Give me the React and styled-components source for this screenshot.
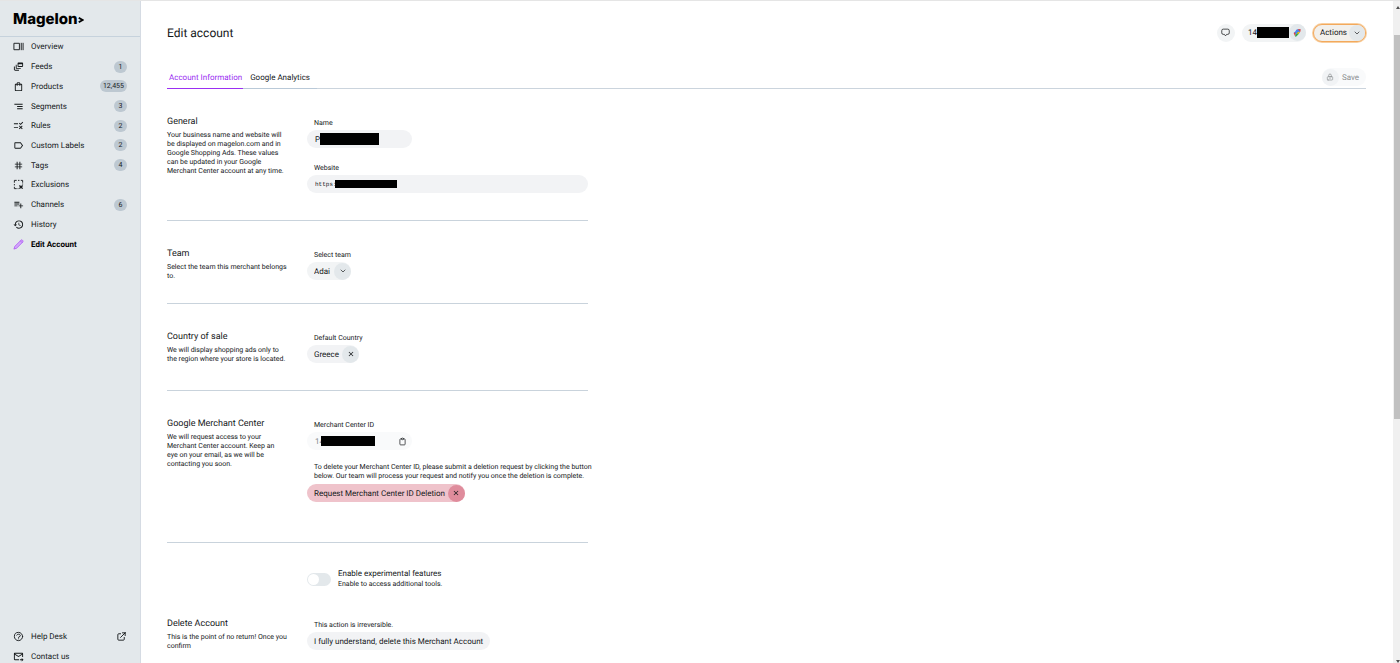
import React, { useState } from "react";
import styled, { createGlobalStyle, css } from "styled-components";
import {
  MdOutlineDynamicFeed,
  MdOutlineShoppingBag,
  MdSegment,
  MdRule,
  MdLabelOutline,
  MdTag,
  MdPlaylistAdd,
  MdHistory,
  MdOutlineForwardToInbox,
  MdClose,
} from "react-icons/md";
import {
  HiOutlineQuestionMarkCircle,
  HiOutlineExternalLink,
  HiOutlineLockClosed,
  HiOutlineClipboard,
} from "react-icons/hi";
import { FiChevronDown } from "react-icons/fi";

const OverviewIcon = () => (
  <svg viewBox="0 0 24 24" fill="none" stroke="currentColor" strokeWidth="2">
    <path d="M2 5h12v14H2zM18 4v16M22 4v16" />
  </svg>
);

const ExclusionsIcon = () => (
  <svg viewBox="0 0 24 24" fill="none" stroke="currentColor" strokeWidth="2">
    <path d="M3 8V3h5M11 3h3M17 3h4v5M21 10v2M3 11v3M3 17v4h5M10 21h2" />
    <path d="m14 14 7 7M21 14l-7 7" strokeWidth="3" />
  </svg>
);

const PencilIcon = () => (
  <svg viewBox="0 0 24 24" fill="#d3a6fb" stroke="#a64bf4" strokeWidth="1.5">
    <path d="M2 22l2-6L18 2q2-1 3 1t1 3L8 20zM16 4l4 4" />
  </svg>
);

const ChatIcon = () => (
  <svg viewBox="0 0 24 24" fill="none" stroke="currentColor" strokeWidth="2">
    <path d="M6 3h12q4 0 4 4v6q0 4-4 4h-3l-3 4-3-4H6q-4 0-4-4V7q0-4 4-4z" />
  </svg>
);

const MerchantIcon = () => (
  <svg viewBox="0 0 24 24">
    <path d="M8 4l5-3h9l-2 10-5 4z" fill="#4285f4" />
    <path d="M14 1h9l-1 8z" fill="#ea4335" />
    <path d="M2 12l7-7 6 4-8 8z" fill="#4285f4" />
    <path d="M7 17l8-8 4 4-8 9-5 1z" fill="#34a853" />
    <path d="M12 12l4-4 5 2-6 6z" fill="#fbbc04" />
    <path d="M2 12l5-2v7l-1 5z" fill="#ea4335" />
  </svg>
);

const menu = [
  { name: "Overview", icon: <OverviewIcon /> },
  { name: "Feeds", icon: <MdOutlineDynamicFeed />, count: "1" },
  { name: "Products", icon: <MdOutlineShoppingBag />, count: "12,455" },
  { name: "Segments", icon: <MdSegment />, count: "3" },
  { name: "Rules", icon: <MdRule />, count: "2" },
  { name: "Custom Labels", icon: <MdLabelOutline />, count: "2" },
  { name: "Tags", icon: <MdTag />, count: "4" },
  { name: "Exclusions", icon: <ExclusionsIcon /> },
  { name: "Channels", icon: <MdPlaylistAdd />, count: "6" },
  { name: "History", icon: <MdHistory /> },
  { name: "Edit Account", icon: <PencilIcon />, active: true },
];

const App = () => {
  const [experimental, setExperimental] = useState(false);

  return (
    <>
      <GlobalStyle />
      <Shell>
        <Sidebar>
          <Logo href="#">
            Magelon
            <svg viewBox="0 0 8 10" fill="none" stroke="currentColor" strokeWidth="2.6">
              <path d="M1 2l5 3-5 3" />
            </svg>
          </Logo>
          <Nav>
            {menu.map((item) => (
              <NavItem key={item.name} href="#" $active={item.active}>
                {item.icon}
                <span>{item.name}</span>
                {item.count && <Count>{item.count}</Count>}
              </NavItem>
            ))}
          </Nav>
          <SideFooter>
            <NavItem href="#">
              <HiOutlineQuestionMarkCircle />
              <span>Help Desk</span>
              <HiOutlineExternalLink />
            </NavItem>
            <NavItem href="#">
              <MdOutlineForwardToInbox />
              <span>Contact us</span>
            </NavItem>
          </SideFooter>
        </Sidebar>

        <Main>
          <TopBar>
            <Title>Edit account</Title>
            <TopActions>
              <RoundButton aria-label="Messages">
                <ChatIcon />
              </RoundButton>
              <Pill>
                <AccountId>
                  14
                  <Redacted $width={32} $height={11} />
                </AccountId>
                <PillIcon>
                  <MerchantIcon />
                </PillIcon>
              </Pill>
              <ActionsButton>
                <PillText>Actions</PillText>
                <PillIcon>
                  <FiChevronDown />
                </PillIcon>
              </ActionsButton>
            </TopActions>
          </TopBar>

          <TabBar>
            <Tab href="#" $active>
              Account Information
            </Tab>
            <Tab href="#">Google Analytics</Tab>
            <SaveButton disabled>
              <PillIcon>
                <HiOutlineLockClosed />
              </PillIcon>
              <span>Save</span>
            </SaveButton>
          </TabBar>

          <Section $bottom={27}>
            <Intro>
              <h2>General</h2>
              <p>
                Your business name and website will be displayed on magelon.com and in Google
                Shopping Ads. These values can be updated in your Google Merchant Center account at
                any time.
              </p>
            </Intro>
            <Fields>
              <Field>
                <Label htmlFor="name">Name</Label>
                <InputBox $short>
                  <Input id="name" defaultValue="P" $chars={5} />
                  <Redacted $width={59} $height={12} />
                </InputBox>
              </Field>
              <Field>
                <Label htmlFor="website">Website</Label>
                <InputBox>
                  <Input id="website" defaultValue="https:" $chars={20} $mono />
                  <Redacted $width={62} $height={8} />
                </InputBox>
              </Field>
            </Fields>
          </Section>

          <Section $bottom={22}>
            <Intro>
              <h2>Team</h2>
              <p>Select the team this merchant belongs to.</p>
            </Intro>
            <Field>
              <Label htmlFor="team">Select team</Label>
              <Pill>
                <Select id="team" defaultValue="Adai">
                  <option>Adai</option>
                </Select>
                <PillIcon>
                  <FiChevronDown />
                </PillIcon>
              </Pill>
            </Field>
          </Section>

          <Section $bottom={26}>
            <Intro>
              <h2>Country of sale</h2>
              <p>We will display shopping ads only to the region where your store is located.</p>
            </Intro>
            <Field>
              <Label as="span">Default Country</Label>
              <PillButton>
                <PillText>Greece</PillText>
                <PillIcon>
                  <MdClose />
                </PillIcon>
              </PillButton>
            </Field>
          </Section>

          <Section $bottom={40}>
            <Intro>
              <h2>Google Merchant Center</h2>
              <p>
                We will request access to your Merchant Center account. Keep an eye&nbsp;on your
                email, as we will be contacting&nbsp;you soon.
              </p>
            </Intro>
            <Field>
              <Label htmlFor="merchant">Merchant Center ID</Label>
              <InputBox $short $muted>
                <Input id="merchant" defaultValue="14" $chars={6} readOnly />
                <Redacted $width={54} $height={10} />
                <CopyButton aria-label="Copy">
                  <HiOutlineClipboard />
                </CopyButton>
              </InputBox>
              <Note>
                To delete your Merchant Center ID, please submit a deletion request by clicking the
                button below. Our team will process your request and notify you once the deletion is
                complete.
              </Note>
              <PillButton $danger>
                <PillText>Request Merchant Center ID Deletion</PillText>
                <PillIcon $danger>
                  <MdClose />
                </PillIcon>
              </PillButton>
            </Field>
          </Section>

          <ToggleRow>
            <Switch
              id="experimental"
              type="checkbox"
              checked={experimental}
              onChange={(e) => setExperimental(e.target.checked)}
            />
            <label htmlFor="experimental">
              <strong>Enable experimental features</strong>
              <span>Enable to access additional tools.</span>
            </label>
          </ToggleRow>

          <Section $last>
            <Intro>
              <h2>Delete Account</h2>
              <p>This is the point of no return! Once you confirm</p>
            </Intro>
            <Field>
              <Label as="span">This action is irreversible.</Label>
              <PillButton>
                <PillText>I fully understand, delete this Merchant Account</PillText>
              </PillButton>
            </Field>
          </Section>
        </Main>

        <Scrollbar aria-hidden="true">
          <Arrow />
          <Thumb />
          <Arrow $down />
        </Scrollbar>
      </Shell>
    </>
  );
};

const GlobalStyle = createGlobalStyle`
  * {
    box-sizing: border-box;
  }

  body {
    margin: 0;
    background: #ffffff;
    color: #15181a;
    font-family: Roboto, "Liberation Sans", Arial, sans-serif;
    font-size: 8px;
    text-rendering: geometricPrecision;
  }

  h1, h2, p {
    margin: 0;
    font-weight: 400;
  }

  button, input, select {
    margin: 0;
    padding: 0;
    border: 0;
    background: transparent;
    color: inherit;
    font: inherit;
    text-rendering: inherit;
  }

  a {
    color: inherit;
    text-decoration: none;
  }

  svg {
    flex: none;
  }
`;

const Shell = styled.div`
  display: grid;
  grid-template-columns: 141px 1fr 7px;
  height: 100vh;
  overflow: hidden;
  border-top: 1px solid #e5e5e5;
`;

const Sidebar = styled.aside`
  display: flex;
  flex-direction: column;
  min-height: 0;
  background: #e3e8eb;
  border-right: 1px solid #d5dbe3;
`;

const Logo = styled.a`
  display: flex;
  align-items: center;
  height: 36px;
  padding-left: 13px;
  border-bottom: 1px solid #c6d2dc;
  color: #000000;
  font-family: Inter, "Liberation Sans", sans-serif;
  font-size: 15px;
  font-weight: 800;

  svg {
    width: 6px;
    height: 8px;
    margin-top: 2px;
  }
`;

const Nav = styled.nav`
  display: grid;
  grid-auto-rows: 1fr;
  height: 217px;
`;

const NavItem = styled.a`
  display: flex;
  align-items: center;
  padding: 0 13px;
  gap: 7px;
  color: ${({ $active }) => ($active ? "#000000" : "inherit")};
  font-weight: ${({ $active }) => ($active ? 700 : 400)};

  svg {
    width: 11px;
    height: 11px;
  }

  span {
    flex: 1;
  }
`;

const Count = styled.b`
  min-width: 13px;
  padding: 0 3px;
  border-radius: 6px;
  background: #bdc8d1;
  font-size: 7px;
  font-weight: 400;
  line-height: 12px;
  text-align: center;
`;

const SideFooter = styled.div`
  display: grid;
  grid-auto-rows: 20px;
  margin-top: auto;
  margin-bottom: -3px;
`;

const Main = styled.main`
  min-width: 0;
  padding: 0 27px 0 26px;
  overflow: hidden;
`;

const TopBar = styled.header`
  display: flex;
  align-items: center;
  justify-content: space-between;
  height: 63px;
`;

const Title = styled.h1`
  font-size: 12px;
  line-height: 18px;
`;

const TopActions = styled.div`
  display: flex;
  align-items: center;
  gap: 7px;
`;

const pill = css`
  display: inline-flex;
  align-items: center;
  height: 18px;
  border-radius: 9px;
  background: #f2f4f5;
`;

const Pill = styled.div`
  ${pill}
`;

const PillButton = styled.button`
  ${pill}
  cursor: pointer;
  background: ${({ $danger }) => ($danger ? "#efc3cb" : "#f2f3f5")};
`;

const PillText = styled.span`
  padding: 0 7px;
  white-space: nowrap;
`;

const AccountId = styled.span`
  display: flex;
  align-items: center;
  padding: 0 4px 0 6px;
`;

const PillIcon = styled.span`
  display: flex;
  align-items: center;
  justify-content: center;
  width: 17px;
  height: 17px;
  margin-left: -4px;
  border-radius: 50%;
  background: ${({ $danger }) => ($danger ? "#df8c9c" : "#e3e8eb")};

  svg {
    width: 8px;
    height: 8px;
  }
`;

const RoundButton = styled.button`
  ${pill}
  justify-content: center;
  width: 18px;

  svg {
    width: 9px;
    height: 9px;
  }
`;

const ActionsButton = styled.button`
  ${pill}
  border: 1px solid #f3a95c;
  background: #f2f0ec;
  box-shadow: 0 0 0 1px #f8cfa0;

  ${PillText} {
    padding: 0 6px;
  }

  ${PillIcon} {
    width: 16px;
    height: 16px;
  }
`;

const Redacted = styled.i`
  flex: none;
  width: ${({ $width }) => $width}px;
  height: ${({ $height }) => $height}px;
  background: #000000;
`;

const TabBar = styled.nav`
  display: flex;
  height: 25px;
  border-bottom: 1px solid #cbd4dd;
`;

const Tab = styled.a`
  display: flex;
  align-items: center;
  height: 25px;
  padding: 2px 1px 0 2px;
  border-bottom: 1px solid ${({ $active }) => ($active ? "#9b2ff2" : "#b9c9d8")};
  color: ${({ $active }) => ($active ? "#9b2ff2" : "inherit")};

  & + & {
    padding: 2px 7px 0;
  }
`;

const SaveButton = styled.button`
  ${pill}
  gap: 3px;
  margin: 4px 0 0 auto;
  padding-right: 7px;
  background: #f9fafb;
  color: #8d9092;

  ${PillIcon} {
    margin: 0;
    background: #f1f3f5;
  }
`;

const Section = styled.section`
  display: grid;
  grid-template-columns: 140px 1fr;
  max-width: 421px;
  padding-top: 25px;
  padding-bottom: ${({ $bottom = 0 }) => $bottom}px;
  border-bottom: ${({ $last }) => ($last ? "0" : "1px solid #c9d3dc")};
`;

const Intro = styled.div`
  padding-right: 20px;

  h2 {
    font-size: 9px;
    line-height: 17px;
  }

  p {
    font-size: 7px;
    line-height: 9px;
  }
`;

const Fields = styled.div`
  display: flex;
  flex-direction: column;
  gap: 11px;
`;

const Field = styled.div`
  display: flex;
  flex-direction: column;
  align-items: flex-start;
`;

const Label = styled.label`
  padding: 4px 7px 2px;
  font-size: 7px;
  line-height: 10px;
`;

const InputBox = styled.div`
  ${pill}
  width: ${({ $short }) => ($short ? "105px" : "100%")};
  padding: 0 5px 0 8px;
  color: ${({ $muted }) => ($muted ? "#85898c" : "inherit")};
  background: ${({ $muted }) => ($muted ? "#f9fafb" : "#f2f3f5")};
`;

const Input = styled.input`
  width: ${({ $chars }) => $chars}px;
  outline: 0;
  ${({ $mono }) =>
    $mono &&
    css`
      font-family: "Liberation Mono", monospace;
      font-size: 6px;
    `}
`;

const CopyButton = styled.button`
  display: flex;
  margin-left: auto;
  color: #202326;

  svg {
    width: 9px;
    height: 9px;
  }
`;

const Select = styled.select`
  appearance: none;
  padding: 0 7px;
`;

/* runs slightly past the column so the sentence stays on two lines */
const Note = styled.p`
  margin-right: -10px;
  padding: 13px 0 3px 7px;
  font-size: 7px;
  line-height: 9px;
`;

const ToggleRow = styled.div`
  display: flex;
  align-items: center;
  gap: 7px;
  padding: 26px 0 2px 140px;

  strong,
  span {
    display: block;
    font-weight: 400;
    line-height: 10px;
  }

  span {
    font-size: 7px;
  }
`;

const Switch = styled.input`
  appearance: none;
  width: 24px;
  height: 13px;
  border-radius: 7px;
  background: #e3e8eb;
  cursor: pointer;

  &::before {
    content: "";
    display: block;
    width: 11px;
    height: 11px;
    margin: 1px;
    border-radius: 50%;
    background: #ffffff;
  }

  &:checked {
    background: #9b2ff2;
  }

  &:checked::before {
    margin-left: 12px;
  }
`;

const Scrollbar = styled.div`
  display: flex;
  flex-direction: column;
  align-items: flex-end;
  background: #f0f0f0;
`;

const Thumb = styled.div`
  width: 6px;
  height: 58%;
  margin-top: 26px;
  margin-bottom: auto;
  background: #c1c1c1;
`;

const Arrow = styled.div`
  margin: 5px 0 0 1px;
  border: 2px solid transparent;
  border-top-width: ${({ $down }) => ($down ? "3px" : "0")};
  border-bottom-width: ${({ $down }) => ($down ? "0" : "3px")};
  border-top-color: ${({ $down }) => ($down ? "#505050" : "transparent")};
  border-bottom-color: ${({ $down }) => ($down ? "transparent" : "#505050")};
`;

export default App;
